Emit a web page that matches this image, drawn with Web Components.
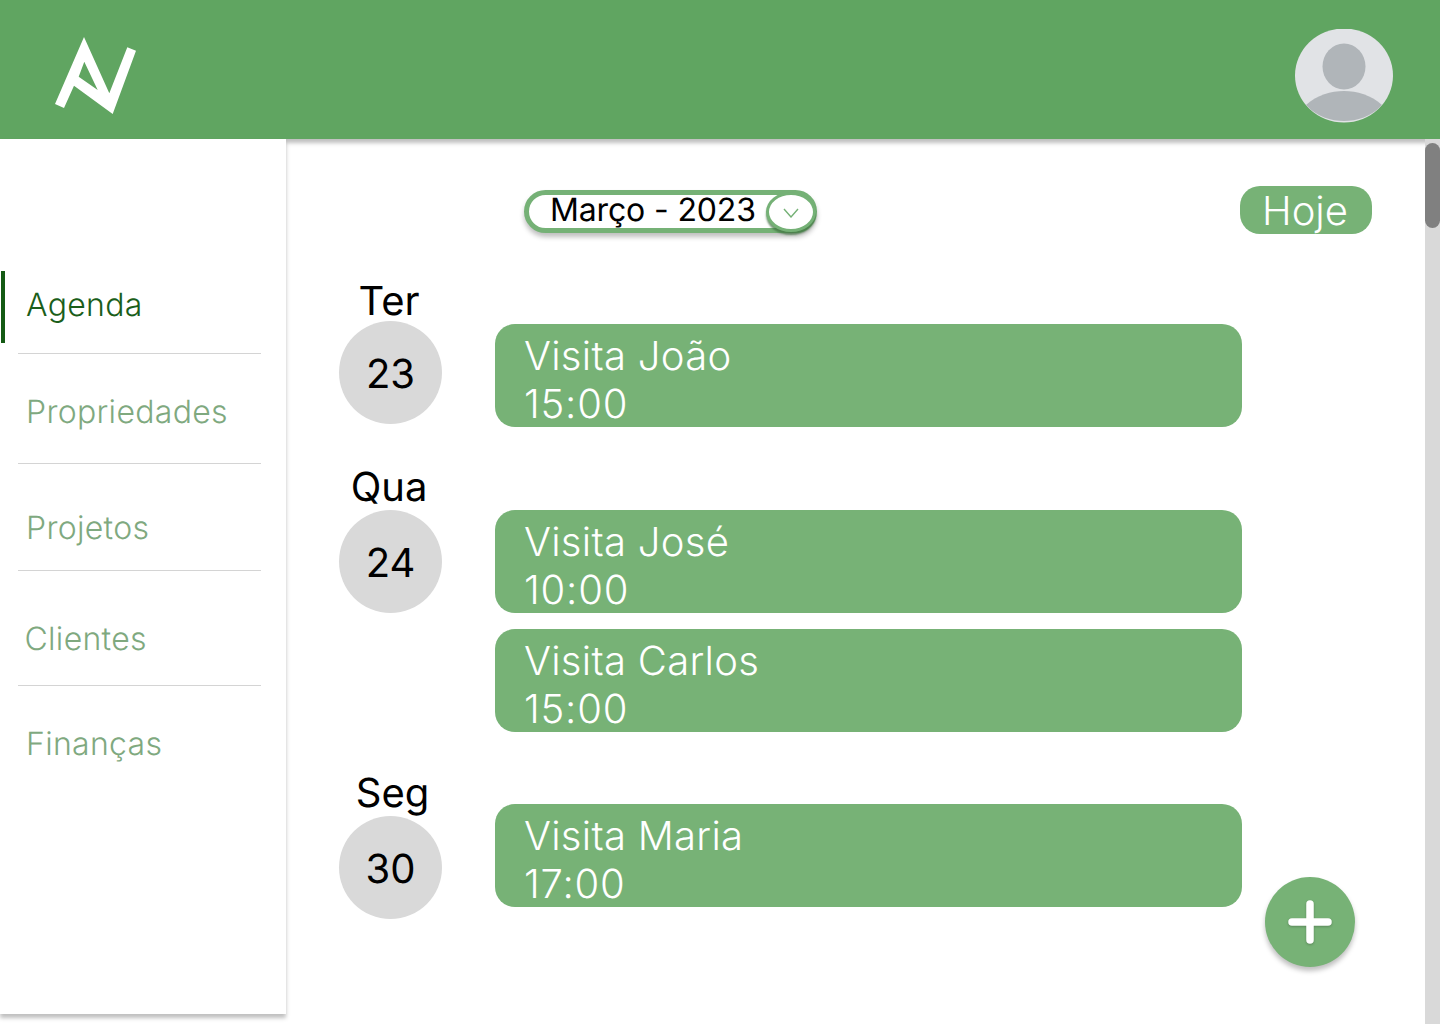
<!DOCTYPE html>
<html lang="pt">
<head>
<meta charset="utf-8">
<title>Agenda</title>
<style>
  html, body { margin: 0; height: 1024px; overflow: hidden; background: #fff; }
  body { font-family: Inter, "Liberation Sans", sans-serif; text-rendering: geometricPrecision; }
  app-shell > nav-item:nth-of-type(4) { --text-left: -1.5px; }
</style>
</head>
<body>
<app-shell>
  <nav-item slot="nav" active top="14" item-height="83">Agenda</nav-item>
  <nav-item slot="nav" top="38" item-height="110">Propriedades</nav-item>
  <nav-item slot="nav" top="44" item-height="107">Projetos</nav-item>
  <nav-item slot="nav" top="48" item-height="115">Clientes</nav-item>
  <nav-item slot="nav" top="38" item-height="110" last>Finanças</nav-item>

  <agenda-day weekday="Ter" date="23" label-gap="0" card-top="43">
    <visit-card name="Visita João" time="15:00"></visit-card>
  </agenda-day>
  <agenda-day weekday="Qua" date="24" label-gap="3" card-top="43" spacing="40">
    <visit-card name="Visita José" time="10:00"></visit-card>
    <visit-card name="Visita Carlos" time="15:00"></visit-card>
  </agenda-day>
  <agenda-day weekday="Seg" date="30" label-gap="3" label-indent="7" card-top="31" spacing="41">
    <visit-card name="Visita Maria" time="17:00"></visit-card>
  </agenda-day>
</app-shell>

<script>
//top green bar with the logo and the user picture
class AppHeader extends HTMLElement {
  constructor() {
    super();
    this.attachShadow({ mode: "open" });
    this.shadowRoot.innerHTML = `
    <style>
      :host {
        display: flex;
        align-items: flex-start;
        justify-content: space-between;
        height: 139px;
        background: #60a561;
        position: relative;
        z-index: 2;
        box-shadow: 0 4px 4px rgba(0,0,0,.25);
      }
      svg { display: block; }
      #logo { margin: 36px 0 0 54px; }
      #avatar { margin: 29px 47px 0 0; }
    </style>
    <svg id="logo" width="84" height="80" viewBox="54 36 84 80">
      <path fill="#fff" fill-rule="evenodd" d="M84 37 L109.3 93.3 L127.3 47.3 L136 50.7 L112.7 114 L74 85.7 L64 108 L55 104 Z M84.3 61.7 L78.7 76.7 L97.7 90 Z"/>
    </svg>
    <svg id="avatar" width="98" height="94" viewBox="0 0 98 94">
      <defs><clipPath id="round"><ellipse cx="49" cy="46.5" rx="49" ry="47"/></clipPath></defs>
      <ellipse cx="49" cy="46.5" rx="49" ry="47" fill="#e1e3e6"/>
      <g clip-path="url(#round)">
        <ellipse cx="49" cy="37.5" rx="21.5" ry="23" fill="#b0b5b9"/>
        <path fill="#b0b5b9" d="M11 76 C22 66 36 62 49 62 C62 62 76 66 87 76 C76 88 62 92 49 92 C36 92 22 88 11 76 Z"/>
      </g>
    </svg>`;
  }
}
customElements.define("app-header", AppHeader);

//one entry of the left menu
class NavItem extends HTMLElement {
  constructor() {
    super();
    this.attachShadow({ mode: "open" });
    this.shadowRoot.innerHTML = `
    <style>
      :host {
        display: block;
        box-sizing: border-box;
        margin-left: 1px;
        color: #7fa97f;
        font-size: 32px;
        font-weight: 300;
        line-height: 40px;
        letter-spacing: .3px;
      }
      :host([active]) { color: #1a5e1a; }
      #row { border-left: 4px solid transparent; box-sizing: border-box; padding-left: 21px; }
      :host([active]) #row { border-left-color: #145a14; height: 72px; }
      #line { height: 1px; background: #d4d4d4; margin: 0 25px 0 17px; }
      span { position: relative; left: var(--text-left, 0); }
    </style>
    <div id="row"><span><slot></slot></span></div>
    <div id="line"></div>`;
  }
  connectedCallback() {
    const top = Number(this.getAttribute("top"));
    const height = Number(this.getAttribute("item-height"));
    const row = this.shadowRoot.querySelector("#row");
    const line = this.shadowRoot.querySelector("#line");
    row.style.paddingTop = top + "px";
    //the divider sits at the bottom of the item
    if (this.hasAttribute("active")) {
      line.style.marginTop = (height - 1 - 72) + "px";
    } else {
      row.style.height = (height - 1) + "px";
    }
    if (this.hasAttribute("last")) line.style.display = "none";
  }
}
customElements.define("nav-item", NavItem);

//month picker with the round arrow button
class MonthPicker extends HTMLElement {
  constructor() {
    super();
    this.attachShadow({ mode: "open" });
    this.shadowRoot.innerHTML = `
    <style>
      :host {
        display: flex;
        align-items: center;
        justify-content: space-between;
        box-sizing: border-box;
        width: 293px;
        height: 43px;
        margin-top: 3px;
        border: 5px solid #75b176;
        border-radius: 22px;
        background: #fff;
        padding-left: 21px;
        box-shadow: 0 4px 5px rgba(0,0,0,.25);
        font-size: 32px;
        line-height: 35px;
        letter-spacing: -.15px;
        color: #000;
      }
      span { margin-bottom: 5px; white-space: nowrap; }
      #btn {
        box-sizing: border-box;
        flex: none;
        width: 50px;
        height: 40px;
        margin-right: -4px;
        border: 3px solid #75b176;
        border-radius: 50%;
        background: #fff;
        display: flex;
        align-items: center;
        justify-content: center;
        box-shadow: 0 3px 2px rgba(60,110,60,.7);
      }
      svg { margin-top: 2px; }
    </style>
    <span><slot></slot></span>
    <div id="btn">
      <svg width="16" height="10" viewBox="0 0 16 10"><path d="M1 1 L8 9 L15 1" fill="none" stroke="#75b176" stroke-width="1.4"/></svg>
    </div>`;
  }
}
customElements.define("month-picker", MonthPicker);

class TodayButton extends HTMLElement {
  constructor() {
    super();
    this.attachShadow({ mode: "open" });
    this.shadowRoot.innerHTML = `
    <style>
      :host {
        display: flex;
        align-items: center;
        justify-content: center;
        box-sizing: border-box;
        width: 132px;
        height: 48px;
        padding: 2px 2px 0 0;
        border-radius: 20px;
        background: #77b276;
        color: #fff;
        font-size: 40px;
        font-weight: 300;
        line-height: 46px;
      }
    </style>
    <slot></slot>`;
  }
}
customElements.define("today-button", TodayButton);

//a visit, name on top and time below
class VisitCard extends HTMLElement {
  constructor() {
    super();
    this.attachShadow({ mode: "open" });
    this.shadowRoot.innerHTML = `
    <style>
      :host {
        display: block;
        box-sizing: border-box;
        width: 747px;
        height: 103px;
        padding: 8px 0 0 29px;
        border-radius: 20px;
        background: #77b276;
        color: #fff;
        font-size: 40px;
        font-weight: 300;
        line-height: 47.5px;
        letter-spacing: .3px;
      }
      div { white-space: nowrap; }
      #time { letter-spacing: .8px; }
    </style>
    <div id="name"></div>
    <div id="time"></div>`;
  }
  connectedCallback() {
    this.shadowRoot.querySelector("#name").textContent = this.getAttribute("name");
    this.shadowRoot.querySelector("#time").textContent = this.getAttribute("time");
  }
}
customElements.define("visit-card", VisitCard);

//a day: weekday and number on the left, visits on the right
class AgendaDay extends HTMLElement {
  constructor() {
    super();
    this.attachShadow({ mode: "open" });
    this.shadowRoot.innerHTML = `
    <style>
      :host {
        display: flex;
        align-items: flex-start;
        gap: 53px;
        color: #000;
        font-size: 40px;
      }
      #date { width: 103px; text-align: center; }
      #weekday { line-height: 40px; height: 40px; margin-left: -5px; margin-right: -2px; white-space: nowrap; }
      #circle {
        width: 103px;
        height: 103px;
        padding-top: 1px;
        box-sizing: border-box;
        border-radius: 50%;
        background: #d9d9d9;
        display: flex;
        align-items: center;
        justify-content: center;
      }
      #cards { display: flex; flex-direction: column; gap: 16px; }
    </style>
    <div id="date">
      <div id="weekday"></div>
      <div id="circle"></div>
    </div>
    <div id="cards"><slot></slot></div>`;
  }
  connectedCallback() {
    const root = this.shadowRoot;
    root.querySelector("#weekday").textContent = this.getAttribute("weekday");
    root.querySelector("#weekday").style.paddingLeft = (this.getAttribute("label-indent") || 0) + "px";
    root.querySelector("#circle").textContent = this.getAttribute("date");
    root.querySelector("#circle").style.marginTop = this.getAttribute("label-gap") + "px";
    root.querySelector("#cards").style.paddingTop = this.getAttribute("card-top") + "px";
    this.style.marginTop = (this.getAttribute("spacing") || 0) + "px";
  }
}
customElements.define("agenda-day", AgendaDay);

//round add button, floats over the list
class AddButton extends HTMLElement {
  constructor() {
    super();
    this.attachShadow({ mode: "open" });
    this.shadowRoot.innerHTML = `
    <style>
      :host {
        position: absolute;
        left: 979px;
        top: 738px;
        width: 90px;
        height: 90px;
        border-radius: 50%;
        background: #77b276;
        display: flex;
        align-items: center;
        justify-content: center;
        box-shadow: 0 4px 5px rgba(0,0,0,.25);
      }
      svg { filter: drop-shadow(0 1px 1px rgba(0,0,0,.25)); }
    </style>
    <svg width="44" height="44" viewBox="0 0 44 44"><path d="M22 4 V40 M4 22 H40" stroke="#fff" stroke-width="7.5" stroke-linecap="round" fill="none"/></svg>`;
  }
}
customElements.define("add-button", AddButton);

//page frame: header, menu, list and scrollbar
class AppShell extends HTMLElement {
  constructor() {
    super();
    this.attachShadow({ mode: "open" });
    this.shadowRoot.innerHTML = `
    <style>
      :host { display: block; height: 1024px; overflow: hidden; }
      #body { display: flex; height: 885px; }
      nav {
        box-sizing: border-box;
        flex: none;
        width: 286px;
        height: 875px;
        padding-top: 132px;
        background: #fff;
        box-shadow: 0 4px 4px rgba(0,0,0,.25);
        position: relative;
        z-index: 3;
      }
      main { flex: 1; position: relative; padding-top: 47px; }
      #tools {
        display: flex;
        align-items: center;
        justify-content: space-between;
        height: 48px;
        margin: 0 53px 47px 238px;
      }
      #days { padding-left: 53px; }
      #track { flex: none; width: 15px; background: #d9d9d9; padding-top: 4px; box-sizing: border-box; position: relative; z-index: 3; }
      #thumb { height: 85px; border-radius: 8px; background: #808080; }
    </style>
    <app-header></app-header>
    <div id="body">
      <nav><slot name="nav"></slot></nav>
      <main>
        <div id="tools">
          <month-picker>Março - 2023</month-picker>
          <today-button>Hoje</today-button>
        </div>
        <div id="days"><slot></slot></div>
        <add-button></add-button>
      </main>
      <div id="track"><div id="thumb"></div></div>
    </div>`;
  }
}
customElements.define("app-shell", AppShell);
</script>
</body>
</html>
